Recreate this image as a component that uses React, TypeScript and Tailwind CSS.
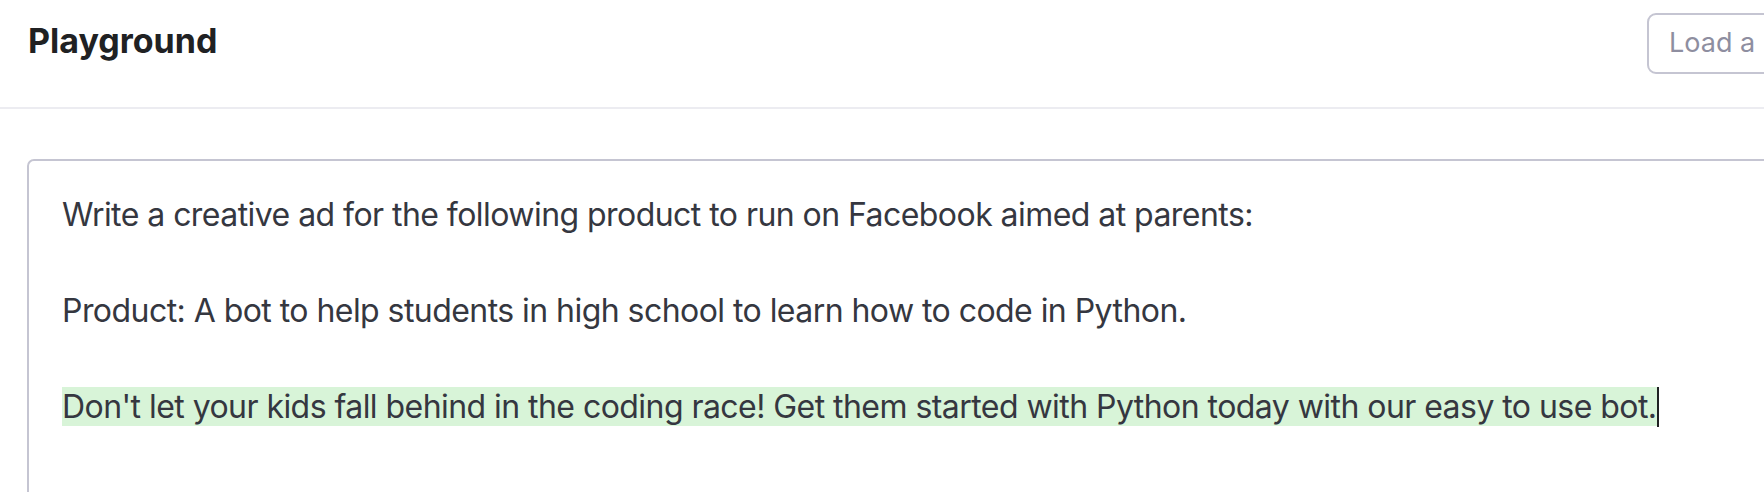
export default function App() {
	return (
		<div className="w-[1764px] h-[492px] overflow-hidden bg-white" style={{ fontFamily: "Inter, 'Noto Sans', sans-serif" }}>
			<div className="w-[2000px]">
				<header className="h-[109px] flex items-start justify-between border-b-2 border-[#ececf1] pl-[28px] pt-[13px]">
					<h1 className="mt-[8px] text-[34px] leading-[40px] font-bold text-[#202123]">Playground</h1>
					<div className="mr-[53px] flex items-center w-[300px] h-[61px] rounded-[9px] border-2 border-[#c5c5d2] pl-[20px] text-[27px] text-[#8e8ea0]">
						Load a preset...
					</div>
				</header>
				<div className="pl-[27px] pt-[50px]">
					<div className="w-[1900px] h-[400px] rounded-[7px] border-2 border-[#c5c5d2] pl-[33px] pt-[30px] text-[32px] leading-[48px] tracking-[-0.55px] text-[#353740]">
						<p>Write a creative ad for the following product to run on Facebook aimed at parents:</p>
						<p>&nbsp;</p>
						<p>Product: A bot to help students in high school to learn how to code in Python.</p>
						<p>&nbsp;</p>
						<p>
							<span className="bg-[#d8f4d8]">Don't let your kids fall behind in the coding race! Get them started with Python today with our easy to use bot.</span>
							<span className="inline-block w-[2px] h-[40px] bg-[#202123] align-middle -mt-[4px]" />
						</p>
					</div>
				</div>
			</div>
		</div>
	);
}
